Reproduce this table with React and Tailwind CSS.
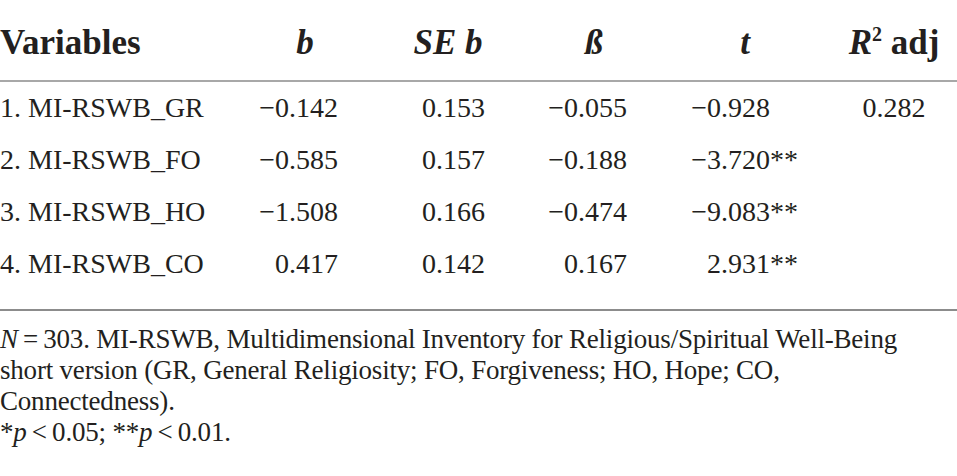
const rows = [
  { name: "1. MI-RSWB_GR", b: "−0.142", se: "0.153", beta: "−0.055", t: "−0.928", stars: "", r2: "0.282" },
  { name: "2. MI-RSWB_FO", b: "−0.585", se: "0.157", beta: "−0.188", t: "−3.720", stars: "**", r2: "" },
  { name: "3. MI-RSWB_HO", b: "−1.508", se: "0.166", beta: "−0.474", t: "−9.083", stars: "**", r2: "" },
  { name: "4. MI-RSWB_CO", b: "0.417", se: "0.142", beta: "0.167", t: "2.931", stars: "**", r2: "" },
];

const cols = "grid grid-cols-[240px_130px_150px_148px_154px_135px]";

export default function App() {
  return (
    <div
      className="w-[957px] h-[476px] bg-white text-[#231f20] overflow-hidden"
      style={{ fontFamily: '"Liberation Serif", "Times New Roman", serif' }}
    >
      <div className={`${cols} h-[80px] items-center pt-[6px] text-[35px] font-bold`}>
        <div>Variables</div>
        <div className="text-center italic">b</div>
        <div className="text-center italic pl-[6px]">SE b</div>
        <div className="text-center italic">ß</div>
        <div className="text-center italic">t</div>
        <div className="text-center pl-[9px] whitespace-nowrap">
          <span className="italic">R</span>
          <span className="text-[20px] align-top relative top-[2px]">2</span> adj
        </div>
      </div>
      <div className="h-[2px] bg-[#a8a8a8]" />

      {rows.map((r) => (
        <div key={r.name} className={`${cols} h-[52px] items-center text-[28px]`}>
          <div>{r.name}</div>
          <div className="text-right pr-[32px]">{r.b}</div>
          <div className="pl-[52px]">{r.se}</div>
          <div className="text-right pr-[41px]">{r.beta}</div>
          <div className="flex">
            <span className="w-[102px] text-right">{r.t}</span>
            <span>{r.stars}</span>
          </div>
          <div className="text-center pl-[9px]">{r.r2}</div>
        </div>
      ))}

      <div className="h-[19px]" />
      <div className="h-[2px] bg-[#8c8c8c]" />

      <p className="pt-[13px] text-[27px] leading-[31px] tracking-[-0.2px]">
        <span className="italic">N</span>{"\u2009=\u2009"}303. MI-RSWB, Multidimensional Inventory for Religious/Spiritual Well-Being
        <br />
        short version (GR, General Religiosity; FO, Forgiveness; HO, Hope; CO,
        <br />
        Connectedness).
        <br />
        *<span className="italic">p</span>{"\u2009<\u2009"}0.05; **<span className="italic">p</span>{"\u2009<\u2009"}0.01.
      </p>
    </div>
  );
}
